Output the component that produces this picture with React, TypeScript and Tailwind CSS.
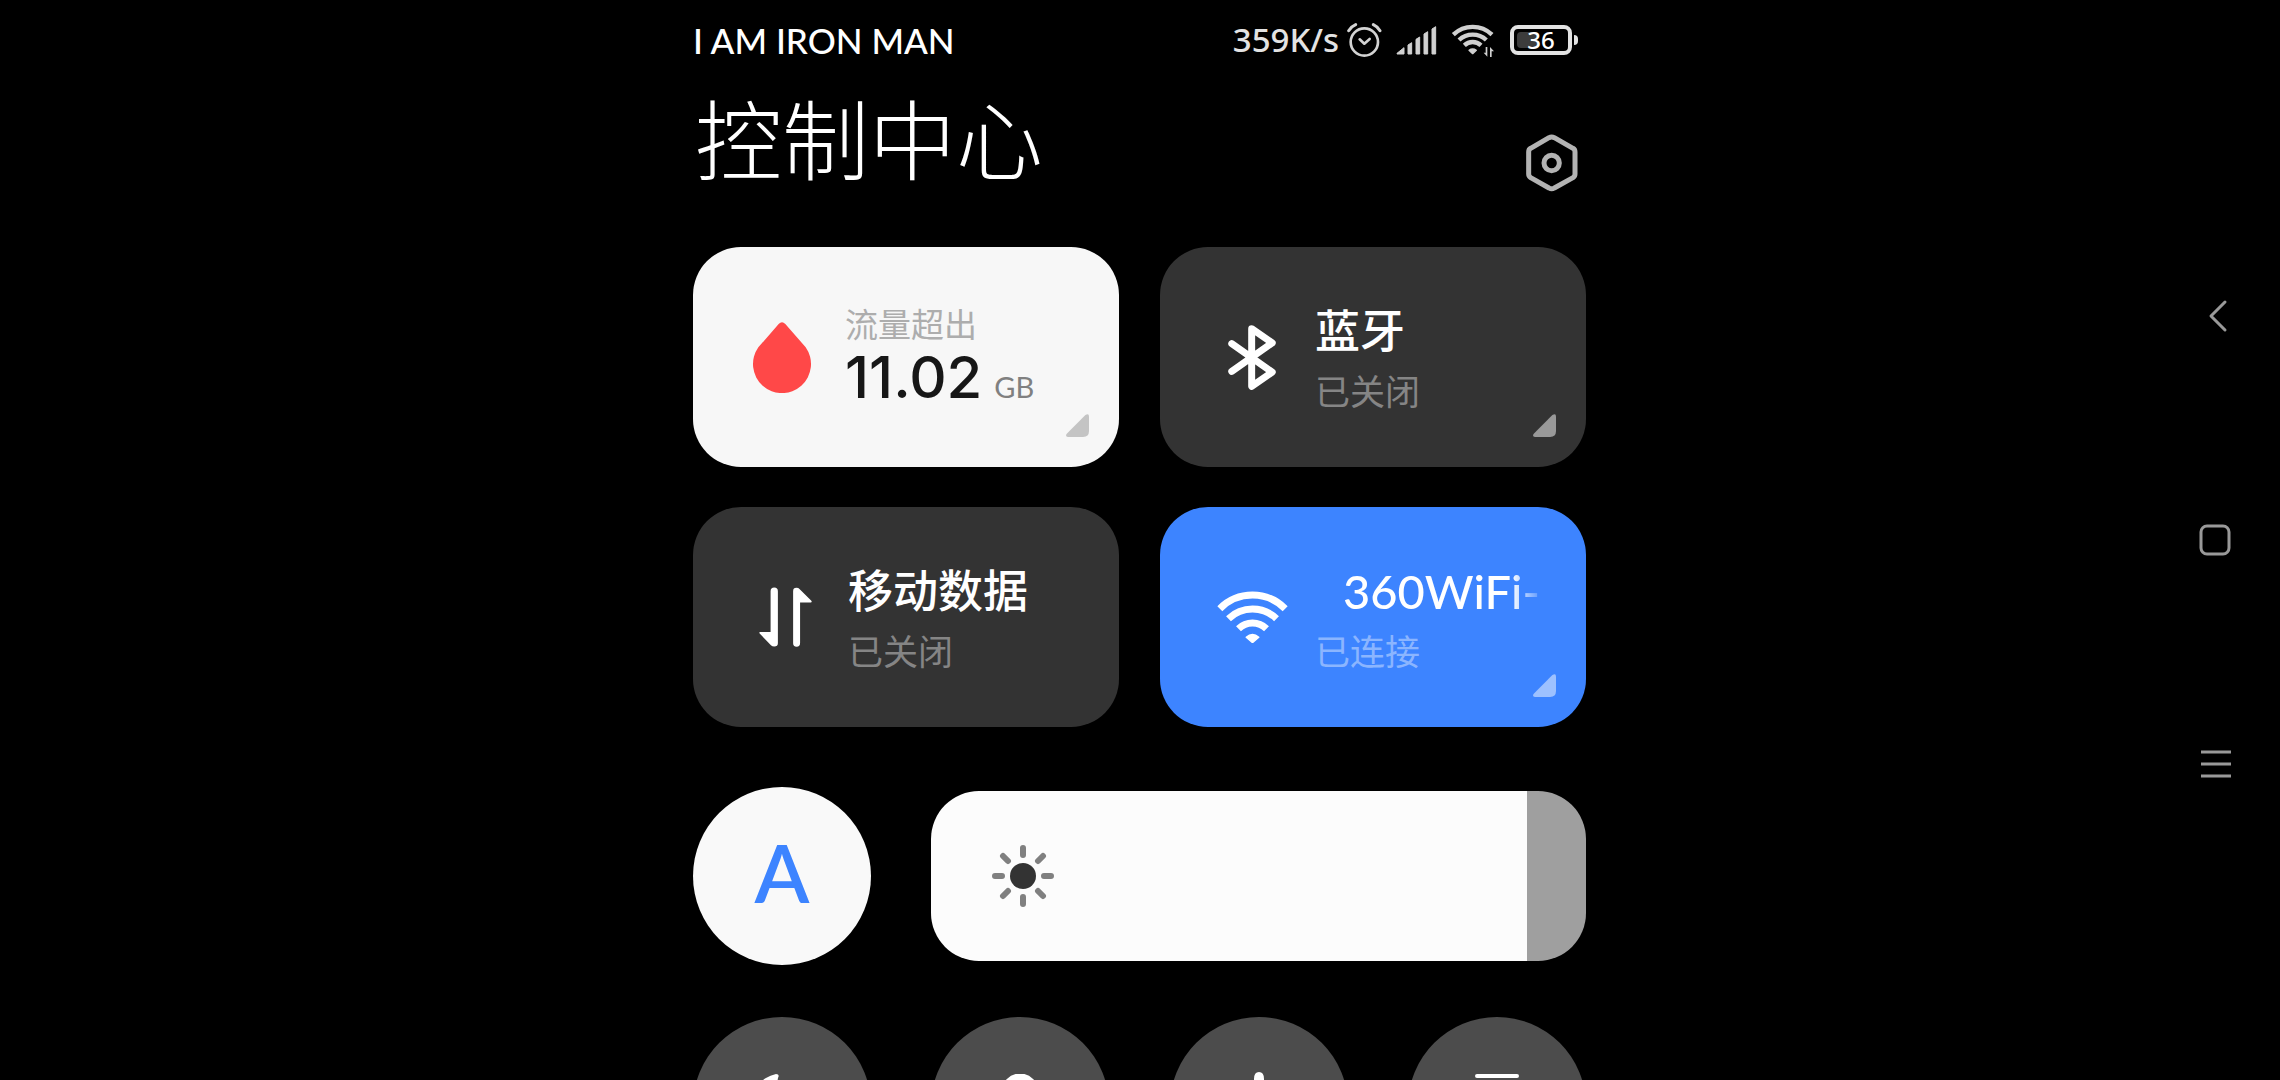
import { useState, type ReactNode } from "react";

const latin = "font-[Lato,'Noto_Sans_CJK_SC',sans-serif]";

function AlarmIcon() {
  return (
    <svg viewBox="0 0 105 108" className="h-9 w-[35px]" fill="none" stroke="#d3d3d3" strokeLinecap="round">
      <circle cx="52" cy="60" r="41" strokeWidth="8" />
      <path d="M5 26Q12 14 26 8M99 26Q92 14 79 8" strokeWidth="9" />
      <path d="M38 52L52 65L68 51" strokeWidth="8" strokeLinejoin="round" />
    </svg>
  );
}

function SignalIcon() {
  return (
    <svg viewBox="0 0 123 90" className="h-[30px] w-[41px]" fill="#d0d0d0" stroke="#d0d0d0" strokeWidth="3" strokeLinejoin="round">
      <path d="M3 85L24 68V87H3ZM36 60L47 53V87H36ZM60 43L71 36V87H60ZM84 27L95 20V87H84ZM108 12L119 5V87H108Z" />
    </svg>
  );
}

function StatusWifiIcon() {
  return (
    <svg viewBox="0 0 132 105" className="h-[35px] w-11" fill="none" stroke="#d0d0d0">
      <g strokeWidth="13">
        <path d="M7 35A84 84 0 0 1 123 35" />
        <path d="M24 51A60 60 0 0 1 106 51" />
        <path d="M40 67A36 36 0 0 1 90 67" />
      </g>
      <path d="M65 92L54 82Q65 74 76 82Z" fill="#d0d0d0" strokeWidth="4" strokeLinejoin="round" />
      <path d="M104 72H109V101L98 89H104ZM117 102V72L129 85H122V102Z" fill="#d0d0d0" stroke="none" />
    </svg>
  );
}

function SettingsIcon() {
  return (
    <svg viewBox="0 0 156 174" className="h-[58px] w-[52px]" fill="none" stroke="#b3b3b3" strokeWidth="15">
      <path d="M69 11Q77 7 85 11L141 43Q147 46 147 54V120Q147 127 141 131L85 162Q77 167 69 162L14 131Q8 127 8 120V54Q8 46 14 43Z" strokeLinejoin="round" />
      <circle cx="77" cy="87" r="23" />
    </svg>
  );
}

function DropIcon() {
  return (
    <svg viewBox="0 0 174 213" className="h-[71px] w-[58px]" fill="#ff4848">
      <path d="M77 6Q87 -4 97 6L158 76A87 87 0 1 1 16 76Z" />
    </svg>
  );
}

function BluetoothIcon() {
  return (
    <svg viewBox="0 0 144 196" className="h-[65px] w-12" fill="none" stroke="#fff" strokeWidth="21" strokeLinecap="round" strokeLinejoin="round">
      <path d="M11 56L133 142L71 185V11L133 54L11 140" />
    </svg>
  );
}

function MobileDataIcon() {
  return (
    <svg viewBox="0 0 160 180" className="h-[60px] w-[53px]" fill="#fff">
      <path d="M35 12A11 11 0 0 1 57 12V169Q57 179 46 179Q40 179 36 175L2 140Q-1 135 4 135H35Z" />
      <path d="M124 169A10 10 0 0 1 103 169V12Q103 2 113 2Q119 2 123 6L158 41Q161 46 156 46H124Z" />
    </svg>
  );
}

function WifiIcon() {
  return (
    <svg viewBox="0 0 212 156" className="h-[52px] w-[71px]" fill="none" stroke="#fff" strokeWidth="21">
      <path d="M8 53A138 138 0 0 1 204 53" />
      <path d="M34 83A104 104 0 0 1 178 83" />
      <path d="M64 113A60 60 0 0 1 148 113" />
      <path d="M106 155L87 139Q106 122 125 139Z" fill="#fff" strokeWidth="4" strokeLinejoin="round" />
    </svg>
  );
}

function SunIcon() {
  return (
    <svg viewBox="-93 -93 186 186" className="size-[62px]">
      <circle r="39" fill="#333" />
      <path
        d="M0 -63V-84M0 63V84M-63 0H-84M63 0H84M45 -45L60 -60M-45 -45L-60 -60M45 45L60 60M-45 45L-60 60"
        stroke="#808080"
        strokeWidth="18"
        strokeLinecap="round"
      />
    </svg>
  );
}

function MoonIcon() {
  return (
    <svg viewBox="0 0 64 64" className="size-16" fill="#fff">
      <path d="M26 0Q30 0 28 4A27 27 0 0 0 60 36Q64 34 64 38A32 32 0 1 1 26 0Z" />
    </svg>
  );
}

function LockIcon() {
  return (
    <svg viewBox="0 0 64 64" className="size-16" fill="none" stroke="#fff" strokeWidth="7">
      <path d="M17 28V18A15 15 0 0 1 47 18V28" />
      <rect x="8" y="28" width="48" height="36" rx="7" fill="#fff" stroke="none" />
    </svg>
  );
}

function PlaneIcon() {
  return (
    <svg viewBox="0 0 68 68" className="size-[68px]" fill="#fff">
      <path d="M34 0Q39 0 39 7V24L66 42V49L39 40V55L47 62V67L34 64L21 67V62L29 55V40L2 49V42L29 24V7Q29 0 34 0Z" />
    </svg>
  );
}

function ScanIcon() {
  return (
    <svg viewBox="0 0 64 64" className="size-16" fill="none" stroke="#fff" strokeWidth="4" strokeLinecap="round">
      <path d="M12 2H52M2 32H62M12 62H52" />
    </svg>
  );
}

function Corner({ className }: { className: string }) {
  return (
    <svg viewBox="0 0 70 70" className={`absolute right-[30px] bottom-[30px] size-[23px] ${className}`} fill="currentColor">
      <path d="M59 3Q70 -4 70 8V52Q70 70 52 70H6Q-4 68 3 59Z" />
    </svg>
  );
}

function Tile({
  className,
  icon,
  corner,
  pressed,
  children,
}: {
  className: string;
  icon: ReactNode;
  corner?: string;
  pressed: boolean;
  children: ReactNode;
}) {
  return (
    <button
      type="button"
      aria-pressed={pressed}
      className={`relative flex h-[220px] items-center rounded-[48px] pr-10 text-left ${className}`}
    >
      <span className="mr-[23px] flex w-20 shrink-0 justify-center">{icon}</span>
      {children}
      {corner && <Corner className={corner} />}
    </button>
  );
}

function Label({ title, titleClass, status, statusClass }: { title: string; titleClass: string; status: string; statusClass: string }) {
  return (
    <span className="flex min-w-0 flex-1 flex-col pt-2">
      <span className={`leading-[60px] font-medium whitespace-nowrap ${titleClass}`}>{title}</span>
      <span className={`text-[35px] leading-[60px] ${statusClass}`}>{status}</span>
    </span>
  );
}

const quick = [
  { label: "勿扰模式", icon: <MoonIcon /> },
  { label: "锁屏", icon: <LockIcon /> },
  { label: "飞行模式", icon: <PlaneIcon /> },
  { label: "扫一扫", icon: <ScanIcon /> },
];

export default function App() {
  const [brightness, setBrightness] = useState(91);

  return (
    <div className={`flex h-screen overflow-hidden bg-black text-white ${latin}`}>
      <div className="flex-1 pl-32">
        <main className="mx-auto w-full max-w-[893px]">
          <header className="flex h-20 items-center justify-between">
            <span className="text-[35px] leading-[40px] font-medium">I AM IRON MAN</span>
            <div className="flex items-center pr-2">
              <span className="mr-2 font-['Noto_Sans',sans-serif] text-[33px] leading-[40px] font-medium text-[#e3e3e3]">359K/s</span>
              <AlarmIcon />
              <span className="ml-3.5">
                <SignalIcon />
              </span>
              <span className="mr-[15px] ml-3.5">
                <StatusWifiIcon />
              </span>
              <span className="relative flex h-[30px] w-[62px] items-center justify-center rounded-lg border-4 border-[#e3e3e3]">
                <span className="absolute top-[3px] left-[3px] h-4 w-5 rounded-sm bg-[#3c3c3c]" />
                <span className="relative font-['Noto_Sans',sans-serif] text-2xl leading-6 font-medium">36</span>
              </span>
              <span className="ml-0.5 h-2.5 w-1 rounded-r-sm bg-[#e3e3e3]" />
            </div>
          </header>

          <div className="flex h-[167px] justify-between">
            <h1 className="pl-0.5 font-['Noto_Sans_CJK_SC',sans-serif] text-[87px] leading-[112px] font-light">控制中心</h1>
            <button type="button" aria-label="设置" className="mt-[54px] mr-2 h-[58px]">
              <SettingsIcon />
            </button>
          </div>

          <div className="grid grid-cols-2 gap-x-[41px] gap-y-10">
            <Tile className="bg-[#f7f7f7] pl-[49px]" icon={<DropIcon />} corner="text-[#c4c4c4]" pressed={true}>
              <span className="flex min-w-0 flex-1 flex-col">
                <span className="text-[33px] leading-[40px] text-[#adadad]">流量超出</span>
                <span className="flex items-baseline gap-3">
                  <span className="font-[Inter,sans-serif] text-[58px] leading-[66px] font-medium text-[#171717]">11.02</span>
                  <span className="text-[29px] leading-[40px] text-[#808080]">GB</span>
                </span>
              </span>
            </Tile>
            <Tile className="bg-[#333] pl-[52px]" icon={<BluetoothIcon />} corner="text-[#999]" pressed={false}>
              <Label title="蓝牙" titleClass="text-[45px]" status="已关闭" statusClass="text-[#858585]" />
            </Tile>
            <Tile className="bg-[#333] pl-[52px]" icon={<MobileDataIcon />} pressed={false}>
              <Label title="移动数据" titleClass="text-[45px]" status="已关闭" statusClass="text-[#858585]" />
            </Tile>
            <Tile className="bg-[#3d84ff] pl-[52px]" icon={<WifiIcon />} corner="text-[#9dc1ff]" pressed={true}>
              <Label
                title="360WiFi-"
                titleClass="overflow-hidden mask-r-from-85% pl-7 text-[47px]"
                status="已连接"
                statusClass="text-[#8bb5ff]"
              />
            </Tile>
          </div>

          <div className="mt-[60px] flex items-center gap-[60px]">
            <button
              type="button"
              aria-label="自动亮度"
              className="flex size-[178px] shrink-0 items-center justify-center rounded-full bg-[#f9f9f9] pb-2 text-[80px] leading-[80px] font-semibold text-[#3d84ff]"
            >
              A
            </button>
            <div className="relative flex flex-1 items-center">
              <input
                type="range"
                aria-label="亮度"
                min={0}
                max={100}
                value={brightness}
                onChange={(e) => setBrightness(Number(e.target.value))}
                className="h-[170px] w-full appearance-none rounded-[48px] [&::-webkit-slider-thumb]:size-px [&::-webkit-slider-thumb]:appearance-none"
                style={{ background: `linear-gradient(to right, #fcfcfc ${brightness}%, #9f9f9f ${brightness}%)` }}
              />
              <span className="pointer-events-none absolute left-[61px]">
                <SunIcon />
              </span>
            </div>
          </div>

          <div className="mt-[52px] flex justify-between">
            {quick.map((q) => (
              <button
                key={q.label}
                type="button"
                aria-label={q.label}
                className="flex size-[178px] items-center justify-center rounded-full bg-[#4c4c4c]"
              >
                {q.icon}
              </button>
            ))}
          </div>
        </main>
      </div>

      <nav className="flex w-[129px] shrink-0 flex-col items-center justify-center pr-0.5">
        <button type="button" aria-label="返回" className="flex h-56 w-full items-center justify-center">
          <svg viewBox="0 0 36 36" className="size-9" fill="none" stroke="#999" strokeWidth="3" strokeLinecap="round" strokeLinejoin="round">
            <path d="M28 4L14 18L28 32" />
          </svg>
        </button>
        <button type="button" aria-label="主页" className="flex h-56 w-full items-center justify-center">
          <svg viewBox="0 0 36 36" className="size-9" fill="none" stroke="#999" strokeWidth="3">
            <rect x="4" y="4" width="28" height="28" rx="6" />
          </svg>
        </button>
        <button type="button" aria-label="最近任务" className="flex h-56 w-full items-center justify-center">
          <svg viewBox="0 0 36 36" className="size-9" fill="none" stroke="#999" strokeWidth="3">
            <path d="M4 6H34M4 18H34M4 30H34" />
          </svg>
        </button>
      </nav>
    </div>
  );
}
